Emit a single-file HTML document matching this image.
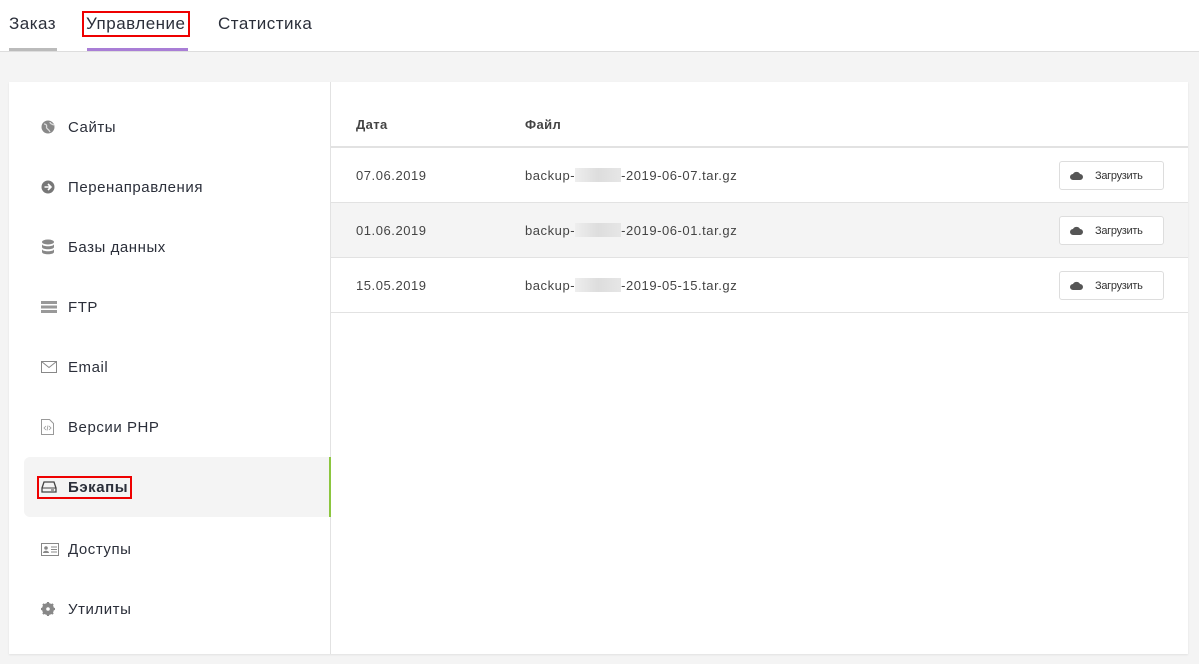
<!DOCTYPE html>
<html><head><meta charset="utf-8"><style>
*{margin:0;padding:0;box-sizing:border-box}
body{width:1199px;height:664px;background:#f4f4f4;font-family:"Liberation Sans","DejaVu Sans",sans-serif;color:#2b2f3a;position:relative;overflow:hidden}
.top{position:absolute;left:0;top:0;width:1199px;height:52px;background:#fff;border-bottom:1px solid #ddd}
.tab{position:absolute;top:14px;font-size:17px;color:#2b2f3a;letter-spacing:.5px}
.ul{position:absolute;top:48px;height:3px}
.card{position:absolute;left:9px;top:82px;width:1179px;height:572px;background:#fff;box-shadow:0 1px 2px rgba(0,0,0,.08)}
.side{position:absolute;left:0;top:0;width:322px;height:572px;border-right:1px solid #e2e2e2}
.item{position:absolute;left:15px;width:307px;height:60px;font-size:15px;display:flex;align-items:center;letter-spacing:.55px}
.item svg{position:absolute;left:17px}
.item span{position:absolute;left:44px}
.act{background:#f4f4f4;border-right:2px solid #8cc63f;border-radius:6px 0 0 6px;font-weight:bold}
.th{position:absolute;top:35px;font-size:13px;font-weight:bold;color:#444;letter-spacing:.4px}
.row{position:absolute;left:322px;width:857px;height:55px;border-bottom:1px solid #e2e2e2;font-size:13px;color:#444;letter-spacing:.55px}
.row .d{position:absolute;left:25px;top:20px}
.row .f{position:absolute;left:194px;top:20px}
.blur{display:inline-block;width:46px;height:14px;background:linear-gradient(90deg,#eee,#ddd,#e6e6e6);vertical-align:-2px}
.btn{position:absolute;left:728px;top:13px;width:105px;height:29px;border:1px solid #ddd;border-radius:3px;background:#fff;font-size:11px;color:#333;letter-spacing:-.3px}
.btn span{position:absolute;left:35px;top:8px}
.btn svg{position:absolute;left:10px;top:9px}
</style></head><body>
<div class="top">
<div class="tab" style="left:9px">Заказ</div>
<div class="ul" style="left:9px;width:48px;background:#bbb"></div>
<div class="tab" style="left:85px;outline:2px solid #e00;outline-offset:1px;top:14px;padding:0 1px">Управление</div>
<div class="ul" style="left:87px;width:101px;background:#a97ed6"></div>
<div class="tab" style="left:218px">Статистика</div>
</div>
<div class="card">
<div class="side">
<div class="item" style="top:15px"><svg width="14" height="14" viewBox="0 0 14 14"><circle cx="7" cy="7" r="6.5" fill="#888"/><path d="M3 4c2 0 3 1 2.5 3S8 9 9 12M9 2c0 2 2 2 4 3" stroke="#ddd" fill="none" stroke-width="1.3"/></svg><span>Сайты</span></div>
<div class="item" style="top:75px"><svg width="14" height="14" viewBox="0 0 14 14"><circle cx="7" cy="7" r="6.5" fill="#777"/><path d="M3.5 7h6M7 4l3 3-3 3" stroke="#fff" fill="none" stroke-width="1.6"/></svg><span>Перенаправления</span></div>
<div class="item" style="top:135px"><svg width="14" height="16" viewBox="0 0 14 16"><ellipse cx="7" cy="3" rx="6" ry="2.5" fill="#888"/><path d="M1 5c0 3 12 3 12 0v3c0 3-12 3-12 0zM1 10c0 3 12 3 12 0v3c0 3-12 3-12 0z" fill="#888"/></svg><span>Базы данных</span></div>
<div class="item" style="top:195px"><svg width="16" height="14" viewBox="0 0 16 14"><rect x="0" y="1" width="16" height="3" fill="#999"/><rect x="0" y="5.5" width="16" height="3" fill="#999"/><rect x="0" y="10" width="16" height="3" fill="#999"/></svg><span>FTP</span></div>
<div class="item" style="top:255px"><svg width="16" height="12" viewBox="0 0 16 12"><rect x=".5" y=".5" width="15" height="11" fill="none" stroke="#888"/><path d="M.5.5l7.5 6 7.5-6" fill="none" stroke="#888"/></svg><span>Email</span></div>
<div class="item" style="top:315px"><svg width="13" height="16" viewBox="0 0 13 16"><path d="M.5.5h8l4 4v11H.5z" fill="none" stroke="#999"/><path d="M5 7l-2 2 2 2M8 7l2 2-2 2M7 6.5l-1 5" stroke="#999" fill="none" stroke-width=".8"/></svg><span>Версии PHP</span></div>
<div class="item act" style="top:375px"><svg width="16" height="12" viewBox="0 0 16 12"><path d="M1 7l2-6h10l2 6v4H1z" fill="none" stroke="#444" stroke-width="1.3"/><path d="M1 7h14" stroke="#444"/><rect x="10" y="8.5" width="3" height="1" fill="#444"/></svg><span style="outline:2px solid #e00;outline-offset:1px;left:16px;padding-left:28px;padding-right:1px">Бэкапы</span></div>
<div class="item" style="top:437px"><svg width="18" height="13" viewBox="0 0 18 13"><rect x=".5" y=".5" width="17" height="12" fill="none" stroke="#888"/><circle cx="5" cy="5" r="1.8" fill="#888"/><path d="M2 10c0-3 6-3 6 0z" fill="#888"/><path d="M10 4h6M10 6.5h6M10 9h6" stroke="#888"/></svg><span>Доступы</span></div>
<div class="item" style="top:497px"><svg width="14" height="14" viewBox="0 0 14 14"><circle cx="7" cy="7" r="4.5" fill="none" stroke="#888" stroke-width="3"/><path d="M7 0v14M0 7h14M2 2l10 10M12 2L2 12" stroke="#888" stroke-width="2.2"/><circle cx="7" cy="7" r="1.8" fill="#fff"/></svg><span>Утилиты</span></div>
</div>
<div class="th" style="left:347px">Дата</div>
<div class="th" style="left:516px">Файл</div>
<div style="position:absolute;left:322px;top:64px;width:857px;border-bottom:2px solid #e2e2e2"></div>
<div class="row" style="top:66px"><div class="d">07.06.2019</div><div class="f">backup-<span class="blur"></span>-2019-06-07.tar.gz</div><div class="btn"><svg width="13" height="9" viewBox="0 0 13 9"><path d="M3 9a3 3 0 010-6 4 4 0 017 0 3 3 0 010 6z" fill="#555"/></svg><span>Загрузить</span></div></div>
<div class="row" style="top:121px;background:#f4f4f4"><div class="d">01.06.2019</div><div class="f">backup-<span class="blur"></span>-2019-06-01.tar.gz</div><div class="btn"><svg width="13" height="9" viewBox="0 0 13 9"><path d="M3 9a3 3 0 010-6 4 4 0 017 0 3 3 0 010 6z" fill="#555"/></svg><span>Загрузить</span></div></div>
<div class="row" style="top:176px"><div class="d">15.05.2019</div><div class="f">backup-<span class="blur"></span>-2019-05-15.tar.gz</div><div class="btn"><svg width="13" height="9" viewBox="0 0 13 9"><path d="M3 9a3 3 0 010-6 4 4 0 017 0 3 3 0 010 6z" fill="#555"/></svg><span>Загрузить</span></div></div>
</div>
</body></html>
